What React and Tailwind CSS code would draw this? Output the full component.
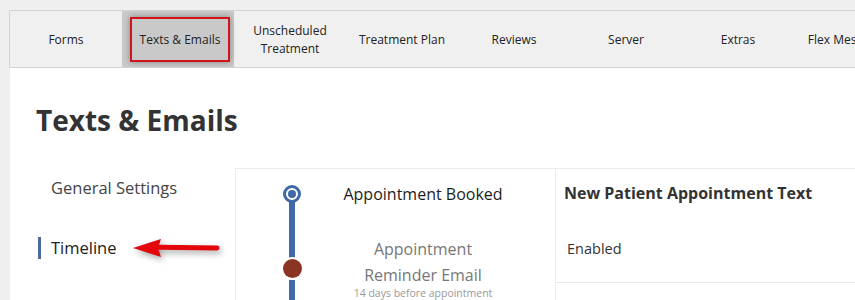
const tabs = [
  { label: 'Forms' },
  { label: 'Texts & Emails', active: true },
  { label: 'Unscheduled Treatment', wrap: true },
  { label: 'Treatment Plan' },
  { label: 'Reviews' },
  { label: 'Server' },
  { label: 'Extras' },
  { label: 'Flex Messaging' },
];

function TabBar() {
  return (
    <div className="flex h-[58px] border border-[#d4d4d4] border-r-0 bg-[#f0f0f0]">
      {tabs.map((t) => (
        <div
          key={t.label}
          className={
            'flex w-[112px] shrink-0 items-center justify-center pt-[1px] text-center text-[12px] leading-[18px] text-[#222] ' +
            (t.active ? 'bg-[#c9c9c9]' : '')
          }
        >
          {t.active ? (
            <span className="ml-[4px] flex h-[45px] w-[100px] items-center justify-center border-2 border-[#d0141c] shadow-[0_0_6px_rgba(0,0,0,0.35)]">
              {t.label}
            </span>
          ) : (
            <span className={t.wrap ? 'w-[80px]' : 'whitespace-nowrap'}>{t.label}</span>
          )}
        </div>
      ))}
    </div>
  );
}

function Arrow() {
  return (
    <svg width="92" height="24" viewBox="0 0 92 24" className="drop-shadow-[2px_3px_3px_rgba(0,0,0,0.35)]">
      <path d="M86 12 L28 11.2" stroke="#e3060b" strokeWidth="5" strokeLinecap="round" />
      <path d="M2 12 L30 3 L27 12 L30 21 Z" fill="#e3060b" />
    </svg>
  );
}

function Timeline() {
  return (
    <div className="flex w-[320px] shrink-0 border-r border-[#ececec]">
      <div className="relative w-[112px] shrink-0">
        <div className="absolute left-[53px] top-[25px] h-[120px] w-[6px] bg-[#3f6aa5]" />
        <div className="absolute left-[47px] top-[16px] flex h-[18px] w-[18px] items-center justify-center rounded-full border-[3px] border-[#3f6aa5] bg-white">
          <div className="h-[8px] w-[8px] rounded-full bg-[#3f6aa5]" />
        </div>
        <div className="absolute left-[47px] top-[90px] h-[19px] w-[19px] rounded-full bg-[#8a3424] ring-2 ring-white" />
      </div>
      <div className="flex w-[150px] flex-col items-center pt-[13px]">
        <div className="whitespace-nowrap text-[16px] leading-[24px] text-[#1c1c1c]">Appointment Booked</div>
        <div className="mt-[30px] whitespace-nowrap text-center text-[16px] leading-[26px] text-[#777]">
          Appointment
          <br />
          Reminder Email
        </div>
        <div className="-mt-[1px] whitespace-nowrap text-[10.5px] leading-[13px] text-[#999]">14 days before appointment</div>
      </div>
    </div>
  );
}

export default function App() {
  return (
    <div
      className="h-[300px] w-[855px] overflow-hidden bg-[#efefef] pl-[9px] pt-[10px]"
      style={{ fontFamily: '"Open Sans", "Noto Sans", sans-serif' }}
    >
      <TabBar />
      <div className="ml-[1px] h-full bg-white">
        <h1 className="pl-[26px] pt-[34px] text-[28px] font-bold leading-[36px] text-[#333]">Texts &amp; Emails</h1>
        <div className="mt-[30px] flex">
          <div className="w-[225px] shrink-0 pl-[28px] pt-[8px]">
            <div className="pl-[13px] text-[16.5px] leading-[24px] text-[#444]">General Settings</div>
            <div className="mt-[36px] flex items-center">
              <div className="h-[22px] w-[3px] bg-[#4b6a9b]" />
              <div className="pl-[10px] text-[16.5px] font-medium leading-[24px] text-[#222]">Timeline</div>
              <div className="ml-[14px]">
                <Arrow />
              </div>
            </div>
          </div>
          <div className="flex flex-1 border-t border-l border-[#ececec]">
            <Timeline />
            <div className="flex-1">
              <div className="pl-[8px] pt-[12px] text-[16px] font-bold leading-[24px] text-[#333]">
                New Patient Appointment Text
              </div>
              <div className="border-b border-[#e6e6e6] pb-[22px] pl-[11px] pt-[33px] text-[14.5px] leading-[22px] text-[#333]">
                Enabled
              </div>
            </div>
          </div>
        </div>
      </div>
    </div>
  );
}
